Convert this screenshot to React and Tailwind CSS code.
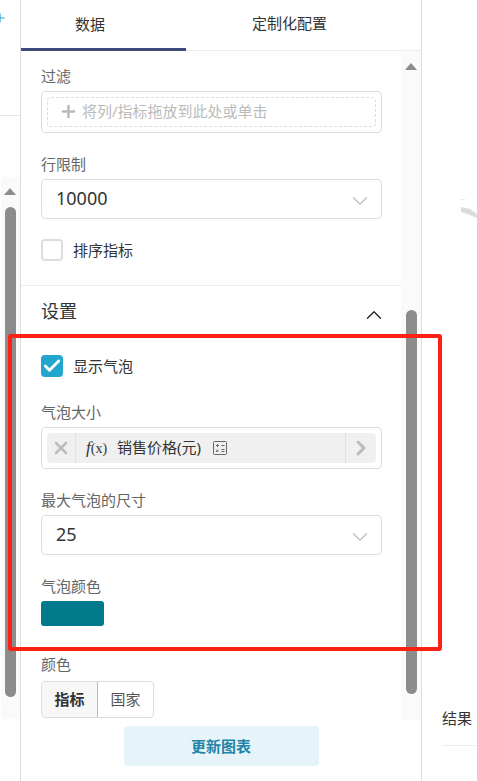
import { Check, ChevronDown, ChevronRight, ChevronUp, Plus, X } from 'lucide-react'

const font = { fontFamily: '"Noto Sans", "Noto Sans CJK SC", sans-serif' }

function Label({ children, className = '' }) {
  return <div className={`text-[15px] leading-5 text-[#666] ${className}`}>{children}</div>
}

function Select({ value, className = '' }) {
  return (
    <div className={`flex items-center justify-between w-[341px] border border-[#ddd] rounded pl-[14px] pr-[8px] ${className}`}>
      <span className="text-[18px] leading-6 text-[#333] -mt-[2px]">{value}</span>
      <ChevronDown className="w-[26px] h-[26px] mt-[3px] text-[#bbb]" strokeWidth={1} />
    </div>
  )
}

function ScrollUp() {
  return <div className="w-0 h-0 border-l-[6.5px] border-r-[6.5px] border-b-[7px] border-l-transparent border-r-transparent border-b-[#8c8c8c]" />
}

function CalcIcon() {
  return (
    <svg width="14" height="14" viewBox="0 0 14 14" fill="none" stroke="#666" strokeWidth="1">
      <rect x="0.5" y="0.5" width="13" height="13" rx="1" />
      <path d="M3 4.5h3M4.5 3v3M8.5 4.5h3M3 8.5l2.5 2.5M5.5 8.5L3 11M8.5 8.5h3M8.5 10.5h3" />
    </svg>
  )
}

export default function App() {
  return (
    <div style={font} className="relative flex w-[477px] h-[781px] overflow-hidden bg-white">
      {/* left rail */}
      <div className="w-[21px] shrink-0 border-r border-[#ddd] flex flex-col">
        <div className="h-[116px] border-b border-[#e5e5e5] pt-[11px] overflow-hidden">
          <Plus className="w-[14px] h-[14px] -ml-[7px] text-[#23a6cd]" strokeWidth={2} />
        </div>
        <div className="mt-[61px] h-[542px] ml-px bg-[#fafafa] flex flex-col items-center pr-px">
          <div className="mt-[11px]"><ScrollUp /></div>
          <div className="mt-[12px] w-[11px] h-[490px] rounded-full bg-[#8c8c8c]" />
        </div>
      </div>

      {/* config panel */}
      <div className="w-[401px] shrink-0 border-r border-[#ddd] flex flex-col">
        <div className="flex h-[51px] border-b border-[#eee]">
          <div className="w-[165px] h-[51px] border-b-[3px] border-[#3d4a7c] flex items-center justify-center pr-[27px] text-[15px] text-[#333]">数据</div>
          <div className="flex-1 flex items-center justify-center text-[15px] text-[#333] pb-[3px] pr-[28px]">定制化配置</div>
        </div>

        <div className="flex h-[669px]">
          <div className="w-[381px] pl-5 pt-[15px]">
            <Label>过滤</Label>
            <div className="mt-[5px] w-[341px] h-[42px] border border-[#ddd] rounded p-[5px]">
              <div className="h-[30px] border border-dashed border-[#ddd] rounded flex items-center pb-[2px] pl-[11px] text-[15px] text-[#bbb]">
                <Plus className="w-[19px] h-[19px] mr-[4px] text-[#bbb]" strokeWidth={3.2} />
                将列/指标拖放到此处或单击
              </div>
            </div>

            <Label className="mt-[21px]">行限制</Label>
            <Select value="10000" className="mt-[5px] h-[40px]" />

            <div className="mt-[20px] flex items-center h-[22px]">
              <div className="w-[22px] h-[22px] border-2 border-[#ddd] rounded" />
              <span className="ml-[10px] text-[15px] text-[#333]">排序指标</span>
            </div>

            <div className="mt-[24px] -ml-5 border-t border-[#eee]" />

            <div className="mt-[13px] flex items-center justify-between h-[24px] pr-[20px]">
              <span className="text-[18px] text-[#333]">设置</span>
              <ChevronUp className="w-[26px] h-[26px] text-[#222] -mr-[6px] mt-[8px]" strokeWidth={1.2} />
            </div>

            <div className="mt-[32px] flex items-center h-[22px]">
              <div className="w-[22px] h-[22px] rounded bg-[#23a6cd] flex items-center justify-center">
                <Check className="w-[20px] h-[20px] text-white" strokeWidth={3.5} />
              </div>
              <span className="ml-[10px] text-[15px] text-[#333]">显示气泡</span>
            </div>

            <Label className="mt-[25px]">气泡大小</Label>
            <div className="mt-[5px] w-[341px] h-[42px] border border-[#ddd] rounded p-[5px]">
              <div className="h-[30px] rounded bg-[#f0f0f0] flex items-center text-[15px] text-[#333]">
                <div className="w-[29px] h-full border-r border-[#e2e2e2] flex items-center justify-center">
                  <X className="w-[20px] h-[20px] text-[#bbb]" strokeWidth={3} />
                </div>
                <span className="ml-[10px] text-[14px] [font-family:'Liberation_Serif',serif]">
                  <i className="text-[17px]">f</i>(x)
                </span>
                <span className="ml-[10px] -mt-[2px]">销售价格(元)</span>
                <span className="ml-[12px]"><CalcIcon /></span>
                <div className="ml-auto w-[31px] h-full border-l border-[#e2e2e2] flex items-center justify-center">
                  <ChevronRight className="w-[24px] h-[24px] text-[#bbb]" strokeWidth={3} />
                </div>
              </div>
            </div>

            <Label className="mt-[21px]">最大气泡的尺寸</Label>
            <Select value="25" className="mt-[5px] h-[40px]" />

            <Label className="mt-[21px]">气泡颜色</Label>
            <div className="mt-[5px] w-[63px] h-[25px] rounded-[3px] bg-[#007a8a]" />

            <Label className="mt-[28px]">颜色</Label>
            <div className="mt-[7px] w-[113px] h-[37px] flex border border-[#ddd] rounded text-[15px]">
              <div className="w-[56px] bg-[#f7f7f7] border-r border-[#bbb] rounded-l flex items-center justify-center font-bold text-[#333]">指标</div>
              <div className="flex-1 flex items-center justify-center text-[#555]">国家</div>
            </div>
          </div>

          <div className="w-[20px] bg-[#fafafa] flex flex-col items-center">
            <div className="mt-[12px]"><ScrollUp /></div>
            <div className="mt-[240px] w-[11px] h-[384px] rounded-full bg-[#8c8c8c]" />
          </div>
        </div>

        <div className="flex justify-center pt-[6px]">
          <div className="w-[195px] h-[40px] rounded bg-[#e6f4f9] flex items-center justify-center text-[15px] font-bold text-[#1f84a8]">更新图表</div>
        </div>
      </div>

      {/* result side */}
      <div className="flex-1 pl-5 flex flex-col overflow-hidden">
        <svg className="mt-[199px] ml-[19px] shrink-0" width="16" height="20" viewBox="0 0 16 20">
          <path d="M0 8L9 10L16 15V19L9 16L0 13Z" fill="#dcdcdc" />
          <path d="M0 0.5h4" stroke="#e8e8e8" />
        </svg>
        <div className="mt-[489px] text-[15px] leading-5 text-[#333]">结果</div>
        <div className="mt-[17px] border-t border-[#eee]" />
      </div>

      {/* red annotation drawn on the screenshot */}
      <div className="absolute left-[8px] top-[334px] w-[434px] h-[317px] border-[4px] border-[#ff2015] rounded-[3px]" />
    </div>
  )
}
